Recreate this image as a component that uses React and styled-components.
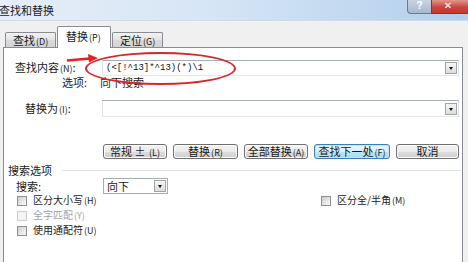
import React from 'react';
import styled, { createGlobalStyle } from 'styled-components';

const GlobalStyle = createGlobalStyle`
  html, body {
    margin: 0;
    padding: 0;
    background: #f0f0f0;
  }
  body {
    font-family: "Noto Sans CJK SC", "Liberation Sans", sans-serif;
  }
`;

const Mn = ({ k }) => <MnText>({k})</MnText>;

const Check = ({ label, k, disabled }) => (
  <CheckItem $disabled={disabled}>
    <Box $disabled={disabled} />
    <span>
      {label}
      <Mn k={k} />
    </span>
  </CheckItem>
);

const App = () => {
  return (
    <Window>
      <GlobalStyle />
      <TitleBar>
        <Title>查找和替换</Title>
        <WinButtons>
          <HelpBtn>?</HelpBtn>
          <CloseBtn>✕</CloseBtn>
        </WinButtons>
      </TitleBar>

      <Body>
        <TabStrip>
          <Tab>
            查找<Mn k="D" />
          </Tab>
          <Tab $active>
            替换<Mn k="P" />
          </Tab>
          <Tab>
            定位<Mn k="G" />
          </Tab>
        </TabStrip>

        <Panel>
          <FieldRow $top={12}>
            <Label $pad={11}>
              查找内容<Mn k="N" />:
            </Label>
            <Field $h={16}>
              <FieldText>{'(<[!^13]*^13)(*)\\1'}</FieldText>
              <DropBtn />
            </Field>
          </FieldRow>

          <OptionRow>
            <span>选项:</span>
            <span>向下搜索</span>
          </OptionRow>

          <FieldRow $top={12}>
            <Label $pad={21}>
              替换为<Mn k="I" />:
            </Label>
            <Field $h={17}>
              <FieldText />
              <DropBtn />
            </Field>
          </FieldRow>

          <ButtonRow>
            <Button $w={64}>
              常规 ± <Mn k="L" />
            </Button>
            <Button $w={65}>
              替换<Mn k="R" />
            </Button>
            <Button $w={64}>
              全部替换<Mn k="A" />
            </Button>
            <Button $w={76} $focus>
              查找下一处<Mn k="F" />
            </Button>
            <Button $w={63}>取消</Button>
          </ButtonRow>

          <GroupHeader>
            <span>搜索选项</span>
            <Rule />
          </GroupHeader>

          <SearchRow>
            <Label $pad={12}>搜索:</Label>
            <Select>
              <span>向下</span>
              <DropBtn />
            </Select>
          </SearchRow>

          <CheckGrid>
            <Check label="区分大小写" k="H" />
            <Check label="区分全/半角" k="M" />
            <Check label="全字匹配" k="Y" disabled />
            <span />
            <Check label="使用通配符" k="U" />
          </CheckGrid>
        </Panel>
      </Body>

      <Ellipse />
      <Arrow width="34" height="12" viewBox="0 0 34 12">
        <path d="M1 8.5 L24 6.5" stroke="#e0231f" strokeWidth="2.4" fill="none" />
        <path d="M22 2 L32 6 L23 10.5 Z" fill="#e0231f" />
      </Arrow>
    </Window>
  );
};

export default App;

// STYLED CSS

const Window = styled.div`
  position: relative;
  width: 468px;
  height: 262px;
  overflow: hidden;
  display: flex;
  flex-direction: column;
  background: #f0f0f0;
  font-size: 11px;
  color: #1a1a1a;
`;

const TitleBar = styled.div`
  height: 21px;
  flex: none;
  display: flex;
  justify-content: space-between;
  align-items: flex-start;
  background: linear-gradient(to right, #e6eef8 0%, #d6e5f5 45%, #bfd7f0 80%, #b4cfeb 100%);
  box-shadow: inset 0 -1px 0 #cfdbe8;
`;

const Title = styled.div`
  padding: 3px 0 0 0;
  margin-left: -1px;
  font-size: 11px;
  line-height: 14px;
  color: #222;
`;

const WinButtons = styled.div`
  display: flex;
  margin-right: -3px;
`;

const HelpBtn = styled.div`
  width: 24px;
  height: 14px;
  box-sizing: border-box;
  border: 1px solid #6b7b90;
  border-top: none;
  border-right: none;
  border-radius: 0 0 0 4px;
  background: linear-gradient(#c7d4e3, #a8b9cd);
  color: #fff;
  font: bold 10px/12px "Liberation Sans", sans-serif;
  text-align: center;
`;

const CloseBtn = styled.div`
  width: 40px;
  height: 14px;
  box-sizing: border-box;
  border: 1px solid #7a3a36;
  border-top: none;
  background: linear-gradient(#e0968d, #c9463d 55%, #c2392f);
  color: #fff;
  font: bold 10px/12px "DejaVu Sans", sans-serif;
  text-align: center;
  text-indent: -6px;
`;

const Body = styled.div`
  flex: 1;
  display: flex;
  flex-direction: column;
  padding: 0 5px 0 3px;
`;

const TabStrip = styled.div`
  height: 26px;
  flex: none;
  display: flex;
  align-items: flex-end;
  gap: 1px;
  padding-left: 2px;
`;

const Tab = styled.div`
  position: relative;
  z-index: ${(p) => (p.$active ? 1 : 0)};
  box-sizing: border-box;
  width: ${(p) => (p.$active ? 54 : 51)}px;
  height: ${(p) => (p.$active ? 22 : 15)}px;
  margin-bottom: ${(p) => (p.$active ? -1 : 0)}px;
  border: 1px solid #898c95;
  border-bottom: none;
  border-radius: 2px 2px 0 0;
  background: ${(p) =>
    p.$active ? '#ffffff' : 'linear-gradient(#f2f2f2, #e3e3e3 50%, #dadada 51%, #d4d4d4)'};
  padding: ${(p) => (p.$active ? '3px 0 0 8px' : '1px 0 0 7px')};
  font-size: 11px;
  line-height: 13px;
  white-space: nowrap;
`;

const Panel = styled.div`
  flex: none;
  height: 240px;
  box-sizing: border-box;
  border: 1px solid #898c95;
  background: #ffffff;
  display: flex;
  flex-direction: column;
`;

const FieldRow = styled.div`
  margin-top: ${(p) => p.$top}px;
  display: grid;
  grid-template-columns: 98px 1fr;
  align-items: center;
  padding-right: 3px;
`;

const Label = styled.div`
  padding-left: ${(p) => p.$pad}px;
  line-height: 14px;
  white-space: nowrap;
`;

const MnText = styled.span`
  font-size: 9px;
  margin-left: 1px;
`;

const Field = styled.div`
  height: ${(p) => p.$h}px;
  box-sizing: border-box;
  display: flex;
  align-items: center;
  border: 1px solid #a5acb5;
  border-color: #a5acb5 #dbdfe6 #e3e9ef #e2e3ea;
  background: #fff;
  padding: 0 1px 0 3px;
`;

const FieldText = styled.div`
  flex: 1;
  font-family: "Liberation Mono", "DejaVu Sans Mono", monospace;
  font-size: 9px;
  line-height: 12px;
  color: #111;
`;

const DropBtn = styled.div`
  position: relative;
  width: 12px;
  height: 12px;
  box-sizing: border-box;
  border: 1px solid #a3a3a3;
  background: linear-gradient(#f6f6f6, #dcdcdc);
  &::after {
    content: '';
    position: absolute;
    left: 3px;
    top: 4px;
    border-left: 2.5px solid transparent;
    border-right: 2.5px solid transparent;
    border-top: 3px solid #111;
  }
`;

const OptionRow = styled.div`
  height: 12px;
  display: grid;
  grid-template-columns: 96px 1fr;
  line-height: 12px;
  & > span:first-child {
    padding-left: 58px;
  }
`;

const ButtonRow = styled.div`
  margin-top: 27px;
  display: flex;
  justify-content: flex-end;
  gap: 6px;
  padding-right: 3px;
`;

const Button = styled.div`
  width: ${(p) => p.$w}px;
  height: 15px;
  box-sizing: border-box;
  border: 1px solid ${(p) => (p.$focus ? '#3c7fb1' : '#707070')};
  border-radius: 3px;
  background: ${(p) =>
    p.$focus
      ? 'linear-gradient(#eaf6fd, #d9f0fc 50%, #bee6fd 51%, #a7d9f5)'
      : 'linear-gradient(#f2f2f2, #ebebeb 50%, #dddddd 51%, #cfcfcf)'};
  box-shadow: inset 0 0 0 1px ${(p) => (p.$focus ? '#c2e4f6' : '#fcfcfc')};
  font-size: 11px;
  line-height: 13px;
  text-align: center;
  white-space: nowrap;
`;

const GroupHeader = styled.div`
  margin-top: 5px;
  height: 12px;
  display: flex;
  align-items: center;
  gap: 10px;
  padding: 0 1px 0 4px;
  line-height: 12px;
`;

const Rule = styled.div`
  flex: 1;
  height: 1px;
  background: #dde3e8;
`;

const SearchRow = styled.div`
  margin-top: 2px;
  display: grid;
  grid-template-columns: 99px 65px;
  align-items: center;
`;

const Select = styled.div`
  height: 16px;
  box-sizing: border-box;
  display: flex;
  align-items: center;
  justify-content: space-between;
  border: 1px solid #a5acb5;
  background: #fff;
  padding: 0 1px 0 3px;
  line-height: 12px;
`;

const CheckGrid = styled.div`
  margin-top: -1px;
  display: grid;
  grid-template-columns: 317px 1fr;
  grid-auto-rows: 15px;
  & > *:nth-child(odd) {
    padding-left: 13px;
  }
`;

const CheckItem = styled.div`
  display: flex;
  align-items: center;
  gap: 6px;
  font-size: 10px;
  line-height: 12px;
  color: ${(p) => (p.$disabled ? '#a3a3a3' : '#1a1a1a')};
`;

const Box = styled.div`
  width: 10px;
  height: 10px;
  box-sizing: border-box;
  border: 1px solid ${(p) => (p.$disabled ? '#cfcfcf' : '#8e8f8f')};
  background: ${(p) =>
    p.$disabled ? '#f4f4f4' : 'linear-gradient(135deg, #c9ccd1, #eceef0 70%, #f7f7f7)'};
`;

const Ellipse = styled.div`
  position: absolute;
  left: 85px;
  top: 52px;
  width: 151px;
  height: 33px;
  box-sizing: border-box;
  border: 2.5px solid #d8262a;
  border-radius: 50%;
  pointer-events: none;
`;

const Arrow = styled.svg`
  position: absolute;
  left: 66px;
  top: 52px;
  pointer-events: none;
`;
